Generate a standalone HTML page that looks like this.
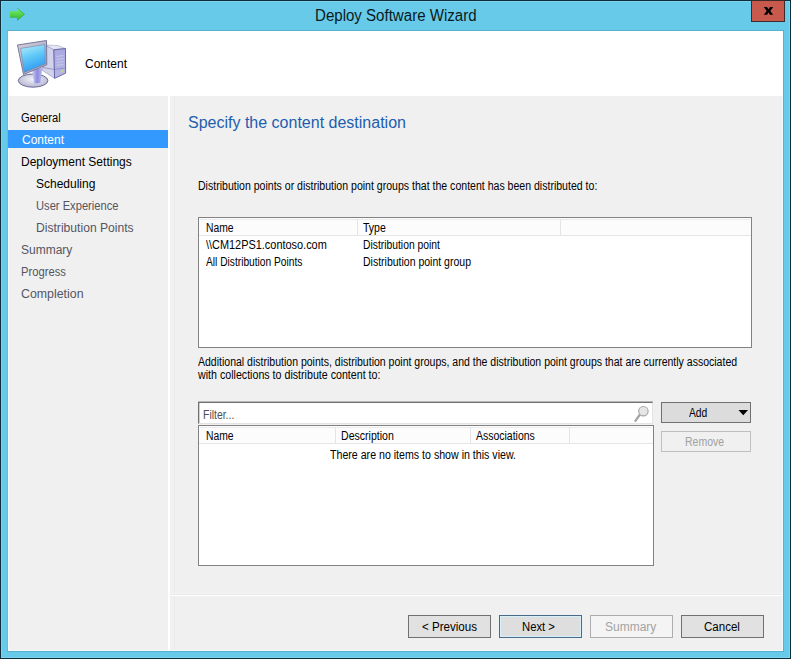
<!DOCTYPE html>
<html><head><meta charset="utf-8">
<style>
*{margin:0;padding:0;box-sizing:border-box}
html,body{width:791px;height:659px;overflow:hidden}
body{position:relative;background:#68cae9;font-family:"Liberation Sans",sans-serif;color:#000}
.a{position:absolute;white-space:nowrap}
.s{position:absolute;white-space:nowrap;font-size:12px;line-height:12px;transform-origin:0 0}
.box{position:absolute}
</style></head><body>
<!-- outer dark border -->
<div class="box" style="left:0;top:0;width:791px;height:659px;border:1px solid #0f2c3a"></div>
<div class="box" style="left:1px;top:1px;width:789px;height:657px;border:1px solid #7ed2ee"></div>
<!-- title bar -->
<svg class="a" style="left:0;top:0" width="30" height="28" viewBox="0 0 30 28">
  <defs><linearGradient id="ga" x1="0" y1="0" x2="0" y2="1"><stop offset="0" stop-color="#7ef06a"/><stop offset="1" stop-color="#2cb82a"/></linearGradient></defs>
  <polygon points="10,11.3 17,11.3 17,8 24.5,14.3 17,20.5 17,17.3 10,17.3" fill="url(#ga)"/><path d="M17,8 L24.5,14.3 L17,20.5 M10,17.3 L17,17.3" fill="none" stroke="#27a227" stroke-width="0.7" opacity="0.8"/>
</svg>
<div class="a" style="left:315px;top:8px;font-size:15.6px;line-height:16px;color:#0a1a22;transform:scaleX(0.966);transform-origin:0 0">Deploy Software Wizard</div>
<div class="box" style="left:751px;top:0;width:34px;height:22px;background:#c75a4c;border:1px solid #3a2a2a"></div>
<svg class="a" style="left:760px;top:4px" width="18" height="14" viewBox="760 4 18 14"><polygon points="763.8,7 767,7 768.5,9.3 770,7 773.2,7 770.3,10.9 773.2,14.8 770,14.8 768.5,12.5 767,14.8 763.8,14.8 766.7,10.9" fill="#000"/></svg>

<!-- client -->
<div class="box" style="left:7px;top:30px;width:777px;height:1px;background:#5aaed0"></div>
<div class="box" style="left:8px;top:31px;width:775px;height:620px;background:#f0f0f0;border:1px solid #f4fbfe;border-top:0"></div>
<div class="box" style="left:7px;top:651px;width:777px;height:1px;background:#5aaed0"></div>
<div class="box" style="left:7px;top:30px;width:1px;height:621px;background:#63bbdf"></div>
<div class="box" style="left:783px;top:30px;width:1px;height:621px;background:#5aaed0"></div>
<!-- header -->
<div class="box" style="left:8px;top:31px;width:775px;height:65px;background:#fff"></div>
<div class="s" style="left:85px;top:58px">Content</div>

<!-- nav -->
<div class="box" style="left:168px;top:96px;width:2px;height:554px;background:#fff"></div>
<div class="box" style="left:174px;top:96px;width:1px;height:554px;background:#ebebeb"></div>
<div class="box" style="left:8px;top:130px;width:160px;height:18px;background:#3399ff"></div>
<div class="s" style="left:21px;top:112px;transform:scaleX(0.93)">General</div>
<div class="s" style="left:22px;top:134px;color:#fff">Content</div>
<div class="s" style="left:21px;top:156px">Deployment Settings</div>
<div class="s" style="left:36px;top:178px">Scheduling</div>
<div class="s" style="left:36px;top:200px;color:#555562;transform:scaleX(0.93)">User Experience</div>
<div class="s" style="left:36px;top:222px;color:#555562;transform:scaleX(1.01)">Distribution Points</div>
<div class="s" style="left:21px;top:244px;color:#555562">Summary</div>
<div class="s" style="left:21px;top:266px;color:#555562;transform:scaleX(0.936)">Progress</div>
<div class="s" style="left:21px;top:288px;color:#555562;transform:scaleX(1.03)">Completion</div>

<!-- content -->
<div class="a" style="left:188px;top:115px;font-size:16px;line-height:16px;color:#1d5eae">Specify the content destination</div>
<div class="s" style="left:198px;top:180px;transform:scaleX(0.879)">Distribution points or distribution point groups that the content has been distributed to:</div>

<div class="box" style="left:198px;top:217px;width:554px;height:131px;background:#fff;border:1px solid #828282"></div>
<div class="box" style="left:199px;top:218px;width:552px;height:18px;background:#fcfcfc;border-bottom:1px solid #e5e5e5"></div>
<div class="box" style="left:200px;top:219px;width:550px;height:1px;background:#ededed"></div>
<div class="box" style="left:357px;top:219px;width:1px;height:16px;background:#e5e5e5"></div>
<div class="box" style="left:560px;top:219px;width:1px;height:16px;background:#e5e5e5"></div>
<div class="s" style="left:206px;top:222px;transform:scaleX(0.86)">Name</div>
<div class="s" style="left:363px;top:222px;transform:scaleX(0.875)">Type</div>
<div class="s" style="left:206px;top:239px;transform:scaleX(0.91)">\\CM12PS1.contoso.com</div>
<div class="s" style="left:363px;top:239px;transform:scaleX(0.86)">Distribution point</div>
<div class="s" style="left:206px;top:256px;transform:scaleX(0.85)">All Distribution Points</div>
<div class="s" style="left:363px;top:256px;transform:scaleX(0.875)">Distribution point group</div>

<div class="s" style="left:198px;top:356px;transform:scaleX(0.8765)">Additional distribution points, distribution point groups, and the distribution point groups that are currently associated</div>
<div class="s" style="left:198px;top:369px;transform:scaleX(0.888)">with collections to distribute content to:</div>

<!-- filter -->
<div class="box" style="left:198px;top:402px;width:455px;height:22px;background:#fff;border:1px solid #e3e3e3;border-top-color:#707070;border-left-color:#707070"></div>
<div class="s" style="left:203px;top:409px;color:#4d4d55;transform:scaleX(0.87)">Filter...</div>
<svg class="a" style="left:630px;top:402px" width="22" height="22" viewBox="630 402 22 22">
  <path d="M639.6,415 L635.4,420.8" stroke="#a4a4a4" stroke-width="2.3" stroke-linecap="round"/>
  <circle cx="643.4" cy="411.2" r="4.7" fill="#e6e6e6" stroke="#a8a8a8" stroke-width="1.2"/>
</svg>
<div class="box" style="left:198px;top:401px;width:455px;height:1px;background:#b8b8b8"></div>
<div class="box" style="left:199px;top:403px;width:1px;height:20px;background:#d0d0d0"></div>

<div class="box" style="left:198px;top:425px;width:456px;height:141px;background:#fff;border:1px solid #828282"></div>
<div class="box" style="left:199px;top:426px;width:454px;height:18px;background:#fcfcfc;border-bottom:1px solid #e5e5e5"></div>
<div class="box" style="left:200px;top:427px;width:452px;height:1px;background:#ededed"></div>
<div class="box" style="left:335px;top:427px;width:1px;height:16px;background:#e5e5e5"></div>
<div class="box" style="left:470px;top:427px;width:1px;height:16px;background:#e5e5e5"></div>
<div class="box" style="left:569px;top:427px;width:1px;height:16px;background:#e5e5e5"></div>
<div class="s" style="left:206px;top:430px;transform:scaleX(0.86)">Name</div>
<div class="s" style="left:341px;top:430px;transform:scaleX(0.88)">Description</div>
<div class="s" style="left:476px;top:430px;transform:scaleX(0.873)">Associations</div>
<div class="s" style="left:330px;top:449px;transform:scaleX(0.885)">There are no items to show in this view.</div>

<div class="box" style="left:661px;top:402px;width:90px;height:21px;border:1px solid #707070;background:#dcdcdc"></div>
<div class="s" style="left:689px;top:407px;transform:scaleX(0.857)">Add</div>
<svg class="a" style="left:737px;top:408px" width="12" height="9" viewBox="0 0 12 9"><polygon points="1.5,2 11,2 6.25,7.2" fill="#000"/></svg>
<div class="box" style="left:661px;top:431px;width:90px;height:21px;border:1px solid #bfbfbf;background:#f0f0f0"></div>
<div class="s" style="left:685px;top:436px;color:#a0a0a0;transform:scaleX(0.875)">Remove</div>

<!-- separator -->
<div class="box" style="left:171px;top:593px;width:611px;height:1px;background:#f5f5f5"></div>
<div class="box" style="left:171px;top:594px;width:611px;height:1px;background:#e8e8e8"></div>
<div class="box" style="left:171px;top:595px;width:611px;height:1px;background:#fff"></div>

<!-- buttons -->
<div class="box" style="left:408px;top:615px;width:83px;height:23px;border:1px solid #707070;background:#e1e1e1"></div>
<div class="s" style="left:422px;top:621px;transform:scaleX(0.965)">&lt; Previous</div>
<div class="box" style="left:499px;top:615px;width:83px;height:23px;border:1px solid #4a6a8a;background:#dedede;box-shadow:inset 0 0 0 1px #d6f0fa"></div>
<div class="s" style="left:522px;top:621px;transform:scaleX(0.94)">Next &gt;</div>
<div class="box" style="left:590px;top:615px;width:83px;height:23px;border:1px solid #adadad;background:#f4f4f4"></div>
<div class="s" style="left:605px;top:621px;color:#a3a3a3">Summary</div>
<div class="box" style="left:681px;top:615px;width:83px;height:23px;border:1px solid #707070;background:#e1e1e1"></div>
<div class="s" style="left:704px;top:621px;transform:scaleX(0.96)">Cancel</div>

<!-- header icon -->
<svg class="a" style="left:0;top:0" width="80" height="100" viewBox="0 0 80 100">
  <defs>
    <linearGradient id="scr" x1="0.2" y1="0" x2="0.5" y2="1"><stop offset="0" stop-color="#b0ecfb"/><stop offset="0.45" stop-color="#60c8f8"/><stop offset="1" stop-color="#2a98f2"/></linearGradient>
    <linearGradient id="frm" x1="0" y1="0" x2="1" y2="1"><stop offset="0" stop-color="#d0d0dc"/><stop offset="1" stop-color="#a0a0b8"/></linearGradient>
    <linearGradient id="twr" x1="0" y1="0" x2="0" y2="1"><stop offset="0" stop-color="#a8a8e0"/><stop offset="1" stop-color="#b8b8e4"/></linearGradient>
    <linearGradient id="nck" x1="0" y1="0" x2="1" y2="0"><stop offset="0" stop-color="#d0d0f4"/><stop offset="0.5" stop-color="#8c8ce0"/><stop offset="1" stop-color="#b8b8ec"/></linearGradient>
    <radialGradient id="bse" cx="0.5" cy="0.4" r="0.6"><stop offset="0" stop-color="#f4f4fa"/><stop offset="1" stop-color="#b4b4d0"/></radialGradient>
  </defs>
  <!-- tower -->
  <polygon points="45,45 58,45.5 65.5,48.5 53.8,49.8" fill="#e6e6f2" stroke="#a4a4c4" stroke-width="0.6"/>
  <polygon points="45,45 53.8,49.8 54.6,78.3 42.5,70.5 43,46" fill="#d2d2ea" stroke="#9c9cc4" stroke-width="0.7"/>
  <polygon points="53.8,49.8 65.5,48.5 65.6,73.2 54.6,78.3" fill="url(#twr)" stroke="#5c5ca4" stroke-width="0.9"/>
  <path d="M56.5,56.5 L63.5,55.5 M56.5,59.5 L63.5,58.5 M56.5,62.5 L63.5,61.5 M56.5,65.3 L63.5,64.3" stroke="#c8c8ec" stroke-width="1"/>
  <path d="M54.5,69.5 L65.5,67.8 M42.8,67.5 L54.5,69.5" stroke="#8080b8" stroke-width="0.7"/>
  <circle cx="62.3" cy="71" r="0.9" fill="#c0e878"/>
  <!-- base -->
  <ellipse cx="33.1" cy="80.6" rx="14.8" ry="6.6" fill="url(#bse)" stroke="#6a6a98" stroke-width="1"/>
  <!-- neck -->
  <polygon points="32,69 42.3,68 40.4,83 34.2,83.6" fill="url(#nck)"/>
  <!-- monitor -->
  <polygon points="17.5,45 46.5,40.5 46.8,64.8 23.5,74.5" fill="url(#frm)" stroke="#78789a" stroke-width="1"/>
  <polygon points="20.6,48.4 44.8,44.6 45.2,63.8 24.2,72.4" fill="url(#scr)" stroke="#7878a8" stroke-width="0.6"/>
</svg>
</body></html>
